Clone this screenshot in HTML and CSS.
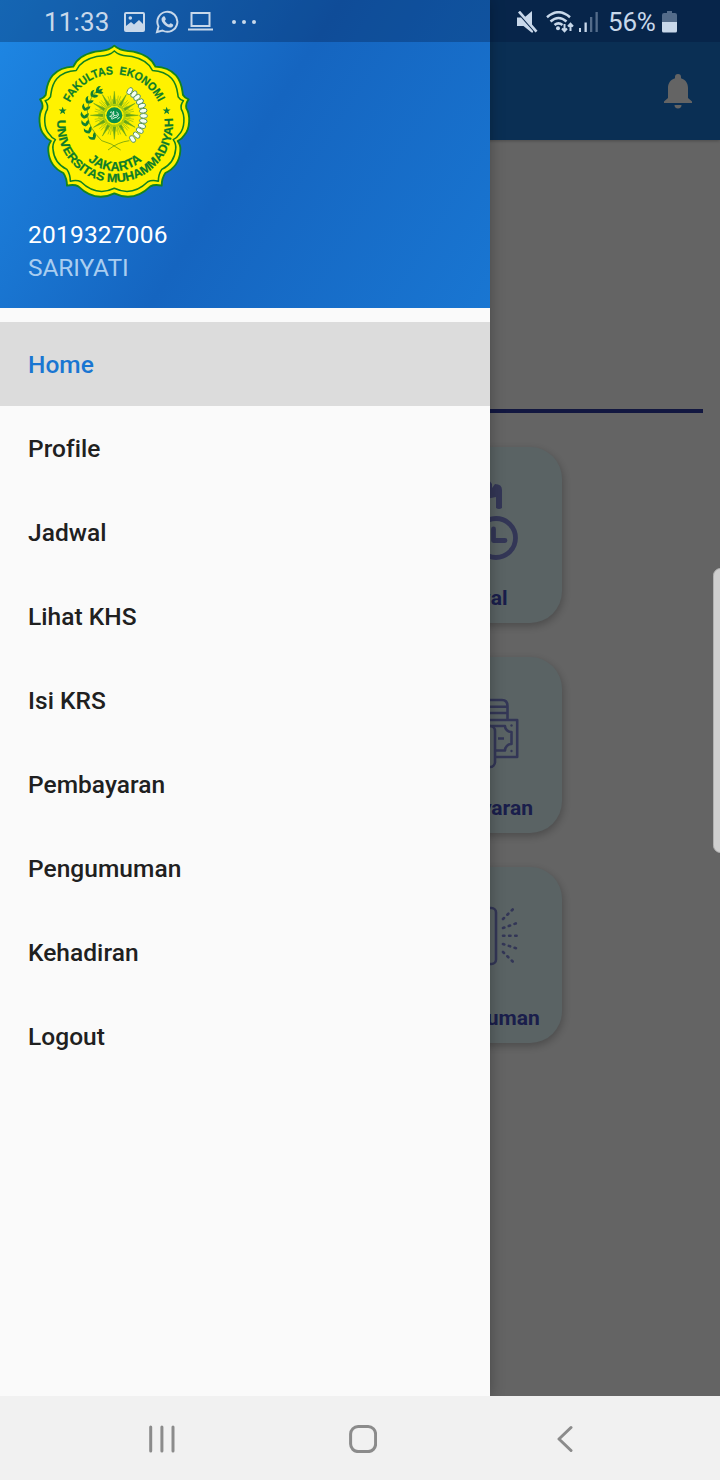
FILE: index.html
```html
<!DOCTYPE html>
<html lang="id">
<head>
<meta charset="utf-8">
<title>Home</title>
<link rel="stylesheet" href="styles.css">
</head>
<body>
<div class="phone">
  <div class="app">
    <header class="appbar">
      <svg class="bell" viewBox="0 0 28 35"><path d="M14 0a3 3 0 0 0-3 3v1.200C6.200 5.600 4 9.600 4 14v10l-4 3.500v1.500h28v-1.500l-4-3.500V14c0-4.400-2.200-8.400-7-9.800V3a3 3 0 0 0-3-3zM10.500 31a3.500 3.500 0 0 0 7 0z"/></svg>
    </header>
    <main class="content">
      <hr class="rule">
      <div class="cards">
        <section class="card">
          <svg class="card-icon bold" viewBox="429 480 90 90"><path d="M474 557H440a5 5 0 0 1-5-5V492a5 5 0 0 1 5-5h40M435 503h50" /><path class="solid" d="M486 476l6 8v4l3-4q7 0 7 6v18q-3 2-6 0v-11l-10 2z"/><circle cx="496" cy="538" r="19.500"/><path d="M493.500 529v11.500h11.500"/></svg>
          <span class="card-label">Jadwal</span>
        </section>
        <section class="card">
          <svg class="card-icon" viewBox="429 690 90 90"><path d="M470 700h32q5.500 0 5.500 6v14M480 706.700h27M480 713h27M488 720h29.200v37H495M489 726h16c0 3.500 3 6 6.500 6v12c-3.500 0-6.500 3-6.500 6.500h-10M498 738.500h6"/><rect x="450" y="726" width="45" height="41" rx="5"/><circle class="solid" cx="511.500" cy="725.500" r="1.200"/><circle class="solid" cx="511.500" cy="751" r="1.200"/></svg>
          <span class="card-label">Pembayaran</span>
        </section>
        <section class="card">
          <svg class="card-icon" viewBox="429 900 90 90"><rect x="462" y="908" width="34" height="56" rx="4.500"/><path class="rays" d="M503 919l10.500-10.300M503 928l14-5M503 935.700h15M503 944l14 4.500M503 952l10.500 10.300"/></svg>
          <span class="card-label">Pengumuman</span>
        </section>
      </div>
    </main>
    <div class="scrim"></div>
    <aside class="drawer">
      <div class="profile">
        <svg class="emblem" viewBox="0 0 510 495">
          <defs>
            <path id="scallop" d="M253 17C232 37 214 31 196 35C164 42 140 57 130 80C105 81 85 88 68 106C49 128 50 149 47 165Q42 174 30 178Q40 190 37 205C24 225 26 266 42 284Q50 297 63 303Q53 317 55 333C58 371 77 388 100 399Q111 415 111 437Q132 432 145 439C180 473 216 478 253 460C290 478 326 473 361 439Q374 432 395 437Q395 415 406 399C429 388 448 371 451 333Q453 317 443 303Q456 297 464 284C480 266 482 225 469 205Q466 190 476 178Q464 174 459 165C456 149 457 128 438 106C421 88 401 81 376 80C366 57 342 42 310 35C292 31 274 37 253 17Z"/>
            <path id="leaf" d="M162 238q16-5 14-18q-9 3-13 9q-7-5-8-13q-9 13 7 22z"/>
            <path id="ray" d="M253 155l4.500 43h-9zM241 168l5 31M265 168l-5 31M234 182l6 18M272 182l-6 18"/>
            <ellipse id="bead" cx="341" cy="226" rx="11.500" ry="7"/>
            <path id="star" d="M0-12l3 8.500h9l-7 5.500 2.500 9L0 5.500-7.500 11-5 2l-7-5.500h9z"/>
            <path id="arc-top" d="M119.800 187.800A147 147 0 0 1 386.200 187.800"/>
            <path id="arc-mid" d="M174 361A120 120 0 0 0 340 358"/>
            <path id="arc-bottom" d="M82 240A173.500 173.500 0 1 0 428 240"/>
          </defs>
          <use href="#scallop" class="edge"/>
          <use href="#scallop" class="edge inner" transform="translate(17.700 17) scale(.93)"/>
          <g class="seal-text">
            <text class="faculty"><textPath href="#arc-top" textLength="331" lengthAdjust="spacingAndGlyphs">FAKULTAS EKONOMI</textPath></text>
            <text><textPath href="#arc-bottom" textLength="577" lengthAdjust="spacingAndGlyphs">UNIVERSITAS MUHAMMADIYAH</textPath></text>
            <text class="city"><textPath href="#arc-mid" textLength="178" lengthAdjust="spacingAndGlyphs">JAKARTA</textPath></text>
          </g>
          <g class="green">
            <use href="#star" x="98" y="212"/><use href="#star" x="410" y="212"/>
            <use href="#leaf" transform="rotate(-44 253 228)"/><use href="#leaf" transform="rotate(-29 253 228)"/><use href="#leaf" transform="rotate(-14 253 228)"/><use href="#leaf" transform="rotate(1 253 228)"/><use href="#leaf" transform="rotate(16 253 228)"/><use href="#leaf" transform="rotate(31 253 228)"/><use href="#leaf" transform="rotate(46 253 228)"/>
            <use href="#leaf" transform="rotate(59 253 228)"/><path d="M195 160q5-12 24-14q-6 12-24 14z" />
          </g>
          <path class="stem" d="M197 155q-58 72 18 147M215 302q28 6 57 28M298 302q-34 4-64 28"/>
          <g transform="translate(0 -1)" class="burst">
            <use href="#ray"/><use href="#ray" transform="rotate(30 253 227)"/><use href="#ray" transform="rotate(60 253 227)"/><use href="#ray" transform="rotate(90 253 227)"/><use href="#ray" transform="rotate(120 253 227)"/><use href="#ray" transform="rotate(150 253 227)"/><use href="#ray" transform="rotate(180 253 227)"/><use href="#ray" transform="rotate(210 253 227)"/><use href="#ray" transform="rotate(240 253 227)"/><use href="#ray" transform="rotate(270 253 227)"/><use href="#ray" transform="rotate(300 253 227)"/><use href="#ray" transform="rotate(330 253 227)"/>
            <circle class="halo" cx="253" cy="227" r="32"/>
          </g>
          <circle class="core" cx="253" cy="226" r="24"/>
          <path class="script" d="M240 218q7-6 7 3t-8 8q8 7 14-2M251 213v13q6 3 12-2M259 216q8 3 6 10t-13 8M243 236q6 3 10-3M262 237l7-5"/>
          <g class="beads">
            <use href="#bead" transform="rotate(-57 253 228)"/><use href="#bead" transform="rotate(-47 253 228)"/><use href="#bead" transform="rotate(-38 253 228)"/><use href="#bead" transform="rotate(-28 253 228)"/><use href="#bead" transform="rotate(-19 253 228)"/><use href="#bead" transform="rotate(-9 253 228)"/><use href="#bead" transform="rotate(1 253 228)"/><use href="#bead" transform="rotate(11 253 228)"/><use href="#bead" transform="rotate(21 253 228)"/><use href="#bead" transform="rotate(31 253 228)"/><use href="#bead" transform="rotate(42 253 228)"/><use href="#bead" transform="rotate(53 253 228)"/>
          </g>
        </svg>
        <div class="student-id">2019327006</div>
        <div class="student-name">SARIYATI</div>
      </div>
      <nav class="menu">
        <a class="item active">Home</a>
        <a class="item">Profile</a>
        <a class="item">Jadwal</a>
        <a class="item">Lihat KHS</a>
        <a class="item">Isi KRS</a>
        <a class="item">Pembayaran</a>
        <a class="item">Pengumuman</a>
        <a class="item">Kehadiran</a>
        <a class="item">Logout</a>
      </nav>
    </aside>
    <div class="statusbar">
      <div class="status-left">
        <span class="clock">11:33</span>
        <svg width="21" height="20" viewBox="0 0 21 20"><path fill-rule="evenodd" d="M2 0h17a2 2 0 0 1 2 2v16a2 2 0 0 1-2 2H2a2 2 0 0 1-2-2V2a2 2 0 0 1 2-2zM2 2v12l5-4 3 2.500 5-4.500 4 4V2zM4.500 6a1.800 1.800 0 1 0 3.600 0a1.800 1.800 0 1 0-3.600 0z"/></svg>
        <svg class="whatsapp" width="24" height="24" viewBox="0 0 24 24"><path class="line" d="M2 22l1.500-5.600A10 10 0 1 1 7.500 20.500z"/><path d="M8.200 6.500c.8-.6 1.500-.4 1.800.4l.8 2c.2.800-.8 1.200-1 1.800 1 1.900 2.300 3.100 4.200 3.900.7-.4 1.200-1.500 1.900-1.300l2.100 1.100c.8.500-.2 2.700-1.800 3-4.500.8-10.500-5-9.600-8.800.2-.9.900-1.600 1.600-2.100z"/></svg>
        <svg class="laptop" width="25" height="19" viewBox="0 0 25 19"><path class="line" d="M3.500 1h18v13h-18zM0 17.500h25"/></svg>
        <svg class="more" width="24" height="4" viewBox="0 0 24 4"><circle cx="2" cy="2" r="2"/><circle cx="12" cy="2" r="2"/><circle cx="22" cy="2" r="2"/></svg>
      </div>
      <div class="status-right">
        <svg width="21" height="22" viewBox="0 0 21 22"><path d="M0 6.500h4L16 20v1.500h-1.500L6.500 15H0zM8 6l7-6v13.500zM1 1.500l2-1.800 17.500 20-2 1.800z"/></svg>
        <svg class="wifi" width="28" height="22" viewBox="0 0 28 22"><path class="line bold" d="M1 6.200q11.500-10 23 0M4.500 10.500q8-7 16 0M8.500 14q4-3.300 8 0"/><circle cx="12" cy="17.300" r="2"/><path class="line" d="M18.500 13v7M16 17.500l2.500 2.700 2.500-2.700M24.500 20v-7M22 15.500l2.500-2.700 2.500 2.700"/></svg>
        <svg class="signal" width="19" height="21" viewBox="0 0 19 21"><path d="M0 17h2v4H0zM5.500 11.500h2.300V21H5.500z"/><path opacity=".4" d="M11 6h2.300v15H11zM16.500 1h2.300v20h-2.300z"/></svg>
        <span class="percent">56%</span>
        <svg class="battery" width="15" height="22" viewBox="0 0 15 22"><path opacity=".4" d="M5 0h5v2h3a2 2 0 0 1 2 2v7H0V4a2 2 0 0 1 2-2h3z"/><path d="M0 11h15v9a1.500 1.500 0 0 1-1.500 1.500h-12A1.500 1.500 0 0 1 0 20z"/></svg>
      </div>
    </div>
    <div class="edge-handle"></div>
  </div>
  <footer class="navbar">
    <svg width="26" height="28" viewBox="0 0 26 28"><path d="M1.700 2v24M12.900 2v24M24 2v24"/></svg>
    <svg class="home" width="28" height="28" viewBox="0 0 28 28"><rect x="1.600" y="1.600" width="25" height="25" rx="7.500"/></svg>
    <svg width="16" height="28" viewBox="0 0 16 28"><path d="M14 2.500L2 14l12 11.500"/></svg>
  </footer>
</div>
</body>
</html>
```
FILE: styles.css
```css
* { box-sizing: border-box; }
body { margin: 0; font-family: Roboto, "Liberation Sans", sans-serif; }
svg { display: block; flex: none; }
.phone { width: 720px; height: 1480px; display: flex; flex-direction: column; overflow: hidden; }
.app { position: relative; flex: 1; background: #fafafa; overflow: hidden; }

.appbar { height: 140px; padding: 42px 28px 0 0; display: flex; align-items: center; justify-content: flex-end; background: #1976d2; box-shadow: 0 1px 3px rgba(0,0,0,.25); }
.bell { width: 28px; height: 35px; fill: #fafafa; }
.content { padding-top: 269px; }
.rule { margin: 0 17px; height: 4px; border: 0; background: #2f3aa0; }
.cards { display: flex; flex-direction: column; gap: 34px; width: 176px; margin: 34px 0 0 386px; }
.card { height: 176px; padding-top: 33px; border-radius: 32px; background: #e0f7fb; box-shadow: 1px 3px 8px rgba(0,0,0,.25); display: flex; flex-direction: column; align-items: center; }
.card-icon { width: 90px; height: 90px; fill: none; stroke: #7f88d8; stroke-width: 2.6; stroke-linejoin: round; }
.card-icon.bold { stroke-width: 4.8; stroke-linecap: round; }
.card-icon .solid { fill: #7f88d8; stroke: none; }
.card-icon .rays { stroke-width: 2.6; stroke-dasharray: 1.4 4.700; stroke-linecap: round; }
.card-label { margin-top: 16px; font-size: 21px; line-height: 25px; font-weight: 700; color: #424bbb; }

.scrim { position: absolute; inset: 0; background: rgba(0,0,0,.6); }
.drawer { position: absolute; inset: 0 auto 0 0; width: 490px; background: #fafafa; box-shadow: 0 0 14px rgba(0,0,0,.3); }
.profile { height: 308px; padding: 40px 28px 0; color: #fff; background: linear-gradient(122.15deg, #1e88e5 0%, #1565c0 50%, #1976d2 100%); }
.student-id, .student-name { font-size: 24.5px; line-height: 33px; letter-spacing: .2px; }
.student-id { margin-top: 13px; }
.student-name { color: #a9cdf0; letter-spacing: -.1px; }

.emblem { width: 170px; height: 165px; margin-left: 2px; }
.edge { fill: #fff200; stroke: #12831f; stroke-width: 5.5; stroke-linejoin: round; }
.edge.inner { stroke-width: 5; }
.seal-text { font: 700 36px "Liberation Sans", Arial, sans-serif; fill: #0c7d2a; stroke: #0c7d2a; stroke-width: .8; }
.seal-text .faculty { word-spacing: 10px; font-size: 35px; }
.seal-text .city { font-size: 39px; }
.green { fill: #0f8032; }
.burst { fill: #62a51b; stroke: #62a51b; stroke-width: 1.4; }
.halo { fill: none; stroke: #b2cf0b; stroke-width: 5; }
.core { fill: #07904e; }
.script { fill: none; stroke: #d7f2df; stroke-width: 3; }
.stem { fill: none; stroke: #4b8d14; stroke-width: 2; }
.beads { fill: #f4fff2; stroke: #4d8a58; stroke-width: 2.5; }

.menu { padding-top: 14px; display: flex; flex-direction: column; }
.item { height: 84px; padding: 0 28px; display: flex; align-items: center; font-size: 24.5px; font-weight: 500; letter-spacing: .04px; color: #202020; }
.item.active { background: #dcdcdc; color: #1976d2; }

.statusbar { position: absolute; inset: 0 0 auto 0; height: 42px; padding: 0 43px 0 44px; display: flex; justify-content: space-between; align-items: center; background: rgba(0,14,50,.28); color: #c8d8ea; fill: #c8d8ea; font-size: 26px; }
.status-left, .status-right { display: flex; align-items: center; height: 42px; padding-top: 1px; }
.clock { width: 80px; letter-spacing: .15px; }
.line { fill: none; stroke: #c8d8ea; stroke-width: 2; }
.line.bold { stroke-width: 2.5; }
.whatsapp { margin-left: 10px; }
.laptop { margin-left: 9px; }
.more { margin-left: 19px; }
.wifi { margin-left: 8px; }
.signal { margin-left: 5px; }
.percent { margin-left: 10px; width: 48px; letter-spacing: -.2px; }
.battery { margin-left: 6px; }

.edge-handle { position: absolute; right: -8px; top: 568px; width: 15px; height: 285px; border-radius: 8px; background: #cfcfcf; border: 1px solid #b0b0b0; }

.navbar { height: 84px; padding: 2px 147px 0 149px; display: flex; align-items: center; justify-content: space-between; background: #f1f1f1; }
.navbar svg { fill: none; stroke: #8b8b8b; stroke-width: 3; stroke-linecap: round; stroke-linejoin: round; }
.navbar .home { margin-right: 6px; }
```
